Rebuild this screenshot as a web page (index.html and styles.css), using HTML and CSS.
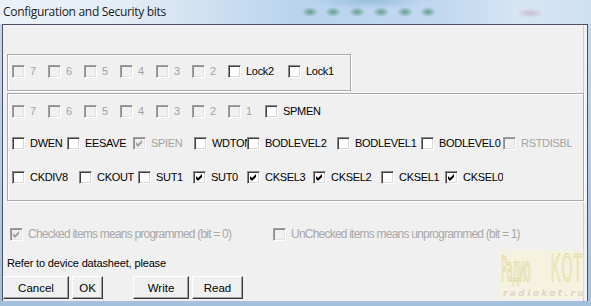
FILE: index.html
```html
<!DOCTYPE html>
<html>
<head>
<meta charset="utf-8">
<title>Configuration and Security bits</title>
<link rel="stylesheet" href="styles.css">
</head>
<body>
<div class="window">
  <div class="titlebar"><span class="title">Configuration and Security bits</span></div>
  <div class="client">
    <div class="group g1">
      <div class="row">
        <div class="item dis w36"><span class="cb"></span><span class="lbl">7</span></div>
        <div class="item dis w36"><span class="cb"></span><span class="lbl">6</span></div>
        <div class="item dis w36"><span class="cb"></span><span class="lbl">5</span></div>
        <div class="item dis w36"><span class="cb"></span><span class="lbl">4</span></div>
        <div class="item dis w36"><span class="cb"></span><span class="lbl">3</span></div>
        <div class="item dis w36"><span class="cb"></span><span class="lbl">2</span></div>
        <div class="item w60"><span class="cb"></span><span class="lbl">Lock2</span></div>
        <div class="item"><span class="cb"></span><span class="lbl">Lock1</span></div>
      </div>
    </div>
    <div class="group g2">
      <div class="row">
        <div class="item dis w36"><span class="cb"></span><span class="lbl">7</span></div>
        <div class="item dis w36"><span class="cb"></span><span class="lbl">6</span></div>
        <div class="item dis w36"><span class="cb"></span><span class="lbl">5</span></div>
        <div class="item dis w36"><span class="cb"></span><span class="lbl">4</span></div>
        <div class="item dis w36"><span class="cb"></span><span class="lbl">3</span></div>
        <div class="item dis w36"><span class="cb"></span><span class="lbl">2</span></div>
        <div class="item dis w37"><span class="cb"></span><span class="lbl">1</span></div>
        <div class="item"><span class="cb"></span><span class="lbl">SPMEN</span></div>
      </div>
      <div class="row r3">
        <div class="item w55"><span class="cb"></span><span class="lbl">DWEN</span></div>
        <div class="item w66"><span class="cb"></span><span class="lbl">EESAVE</span></div>
        <div class="item dis w61"><span class="cb on"><svg viewBox="0 0 13 13"><polygon points="3,5 5,7 9,3 9,6 5,10 3,8"/></svg></span><span class="lbl">SPIEN</span></div>
        <div class="item w53"><span class="cb"></span><span class="lbl">WDTON</span></div>
        <div class="item w90"><span class="cb"></span><span class="lbl">BODLEVEL2</span></div>
        <div class="item w84"><span class="cb"></span><span class="lbl">BODLEVEL1</span></div>
        <div class="item w82"><span class="cb"></span><span class="lbl">BODLEVEL0</span></div>
        <div class="item dis"><span class="cb"></span><span class="lbl">RSTDISBL</span></div>
      </div>
      <div class="row r4">
        <div class="item w67"><span class="cb"></span><span class="lbl">CKDIV8</span></div>
        <div class="item w59"><span class="cb"></span><span class="lbl">CKOUT</span></div>
        <div class="item w55"><span class="cb"></span><span class="lbl">SUT1</span></div>
        <div class="item w54"><span class="cb on"><svg viewBox="0 0 13 13"><polygon points="3,5 5,7 9,3 9,6 5,10 3,8"/></svg></span><span class="lbl">SUT0</span></div>
        <div class="item w66"><span class="cb on"><svg viewBox="0 0 13 13"><polygon points="3,5 5,7 9,3 9,6 5,10 3,8"/></svg></span><span class="lbl">CKSEL3</span></div>
        <div class="item w68"><span class="cb on"><svg viewBox="0 0 13 13"><polygon points="3,5 5,7 9,3 9,6 5,10 3,8"/></svg></span><span class="lbl">CKSEL2</span></div>
        <div class="item w64"><span class="cb"></span><span class="lbl">CKSEL1</span></div>
        <div class="item"><span class="cb on"><svg viewBox="0 0 13 13"><polygon points="3,5 5,7 9,3 9,6 5,10 3,8"/></svg></span><span class="lbl">CKSEL0</span></div>
      </div>
    </div>
    <div class="legend">
      <div class="item dis w263"><span class="cb on"><svg viewBox="0 0 13 13"><polygon points="3,5 5,7 9,3 9,6 5,10 3,8"/></svg></span><span class="lbl ltxt">Checked items means programmed (bit = 0)</span></div>
      <div class="item dis"><span class="cb"></span><span class="lbl ltxt">UnChecked items means unprogrammed (bit = 1)</span></div>
    </div>
    <div class="note">Refer to device datasheet, please</div>
    <div class="buttons">
      <button class="btn b-cancel">Cancel</button>
      <button class="btn b-ok">OK</button>
      <button class="btn b-write">Write</button>
      <button class="btn b-read">Read</button>
    </div>
  </div>
  <div class="watermark">
    <div class="wm-big"><span class="wm-a">Радио</span><span class="wm-b">КОТ</span></div>
    <div class="wm-small">radiokot.ru</div>
  </div>
</div>
</body>
</html>
```
FILE: styles.css
```css
* { box-sizing: border-box; margin: 0; padding: 0; }
html, body { width: 591px; height: 306px; overflow: hidden; }
body {
  font-family: "Liberation Sans", Arial, sans-serif;
  background: #9db8d6;
}
.window {
  position: relative;
  width: 591px;
  height: 306px;
  display: flex;
  flex-direction: column;
  background: linear-gradient(180deg, #c6d9ec 0%, #a4bfdc 100%);
}
.titlebar {
  height: 24px;
  padding: 2px 0 0 3px;
  background:
    radial-gradient(ellipse 8px 5px at 310px 12px, rgba(70,140,105,.75), rgba(70,140,105,0)),
    radial-gradient(ellipse 8px 5px at 333px 12px, rgba(70,140,105,.75), rgba(70,140,105,0)),
    radial-gradient(ellipse 8px 5px at 357px 12px, rgba(70,140,105,.75), rgba(70,140,105,0)),
    radial-gradient(ellipse 8px 5px at 381px 12px, rgba(70,140,105,.75), rgba(70,140,105,0)),
    radial-gradient(ellipse 8px 5px at 405px 12px, rgba(70,140,105,.75), rgba(70,140,105,0)),
    radial-gradient(ellipse 8px 5px at 428px 12px, rgba(70,140,105,.75), rgba(70,140,105,0)),
    radial-gradient(ellipse 14px 5px at 530px 13px, rgba(190,140,165,.45), rgba(190,140,165,0)),
    radial-gradient(ellipse 60px 8px at 370px 1px, rgba(120,170,200,.5), rgba(120,170,200,0)),
    linear-gradient(90deg, #edf2f8 0px, #e3ecf5 130px, #c9ddf0 230px, #b9d3ee 300px, #c2d9f0 450px, #d7e6f4 520px, #cde0f2 591px);
}
.title {
  font-family: "Open Sans", "Noto Sans", sans-serif;
  font-size: 12px;
  letter-spacing: -0.3px;
  color: #1b1b1b;
  line-height: 16px;
}
.client {
  margin: 0 3px 0 2px;
  height: 277px;
  border: 1px solid #4a5260;
  border-bottom: none;
  background: #f0f0f0;
  box-shadow: inset -3px 0 0 #f0f0f0, inset -4px 0 0 #cdcdcd;
  display: flex;
  flex-direction: column;
  align-items: flex-start;
}
.group {
  margin-left: 4px;
  border: 1px solid #a9a9a9;
  box-shadow: inset 1px 1px 0 #fff, 1px 1px 0 #fff;
}
.g1 { margin-top: 29px; width: 344px; height: 37px; padding: 10px 0 0 4px; }
.g2 { margin-top: 2px; width: 577px; height: 108px; padding: 11px 0 0 4px; }
.row { display: flex; height: 13px; }
.r3 { margin-top: 19px; }
.r4 { margin-top: 21px; }
.item {
  display: flex;
  align-items: center;
  height: 13px;
  flex: none;
  overflow: hidden;
  white-space: nowrap;
  font-size: 11px;
  letter-spacing: -0.3px;
  color: #000;
}
.w36 { width: 36px; } .w37 { width: 37px; } .w53 { width: 53px; } .w54 { width: 54px; }
.w55 { width: 55px; } .w59 { width: 59px; } .w60 { width: 60px; } .w61 { width: 61px; }
.w64 { width: 64px; } .w66 { width: 66px; } .w67 { width: 67px; } .w68 { width: 68px; }
.w82 { width: 82px; } .w84 { width: 84px; } .w90 { width: 90px; } .w263 { width: 263px; }
.cb {
  flex: none;
  width: 13px;
  height: 13px;
  background: #fff;
  border-top: 1px solid #8a8a8a;
  border-left: 1px solid #8a8a8a;
  border-right: 1px solid #fff;
  border-bottom: 1px solid #fff;
  box-shadow: inset 1px 1px 0 #404040, inset -1px -1px 0 #d8d8d8;
  position: relative;
}
.cb svg { position: absolute; left: -1px; top: -1px; width: 13px; height: 13px; }
.cb svg polygon { fill: #000; }
.lbl { margin-left: 5px; line-height: 13px; }
.dis { color: #a3a3a3; }
.dis .cb { background: #f0f0f0; border-top-color: #a0a0a0; border-left-color: #a0a0a0; box-shadow: inset 1px 1px 0 #8c8c8c, inset -1px -1px 0 #e3e3e3; }
.dis .cb svg polygon { fill: #a0a0a0; }
.legend { margin-top: 26px; padding-left: 7px; display: flex; height: 14px; }
.legend .item { height: 14px; }
.ltxt { font-size: 12px; letter-spacing: -0.78px; color: #a8a8a8; line-height: 14px; }
.note {
  margin-top: 15px;
  padding-left: 4px;
  font-size: 11px;
  line-height: 14px;
  letter-spacing: -0.15px;
  color: #000;
}
.buttons { margin-top: 6px; display: flex; }
.btn {
  height: 23px;
  font-family: "Liberation Sans", Arial, sans-serif;
  font-size: 11.5px;
  color: #000;
  background: #f0f0f0;
  border: 1px solid;
  border-color: #fff #3a3a3a #3a3a3a #fff;
  box-shadow: inset -1px -1px 0 #a0a0a0;
}
.b-cancel { width: 66px; }
.b-ok { width: 31px; margin-left: 3px; }
.b-write { width: 56px; margin-left: 30px; }
.b-read { width: 51px; margin-left: 3px; }
.watermark {
  position: absolute;
  left: 500px;
  top: 250px;
  width: 84px;
  height: 48px;
  background: rgba(250, 246, 205, 0.45);
}
.wm-big {
  display: flex;
  justify-content: space-between;
  align-items: flex-start;
  height: 38px;
  padding: 5px 1px 0 1px;
  font-family: "DejaVu Sans", sans-serif;
  color: #f3eec6;
  -webkit-text-stroke: 0.4px #e2dba8;
}
.wm-big span { display: inline-block; transform-origin: left top; }
.wm-a { font-size: 10px; line-height: 9px; letter-spacing: -0.5px; transform: scaleY(3.3); }
.wm-b { font-size: 14px; line-height: 11px; letter-spacing: 1px; transform: scaleY(2.6); }
.wm-small {
  font-family: "DejaVu Sans", sans-serif;
  font-size: 9px;
  font-weight: bold;
  font-style: italic;
  letter-spacing: 2.4px;
  color: #e2d4cf;
  padding-left: 3px;
  line-height: 10px;
}
```
